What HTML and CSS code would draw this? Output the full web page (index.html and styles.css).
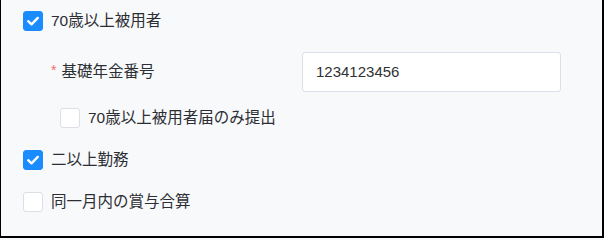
FILE: index.html
```html
<!DOCTYPE html>
<html lang="ja">
<head>
<meta charset="utf-8">
<link rel="stylesheet" href="styles.css">
</head>
<body>
<div class="frame">
  <div class="row r1">
    <span class="cb checked"><svg viewBox="0 0 20 20" width="20" height="20"><path d="M5.2 10.2 L8.5 13.3 L14.8 6.9" fill="none" stroke="#fff" stroke-width="2.4" stroke-linecap="round" stroke-linejoin="round"/></svg></span>
    <span class="lbl">70歳以上被用者</span>
  </div>
  <div class="row r2">
    <div class="field-label"><span class="req">*</span>基礎年金番号</div>
    <div class="input">1234123456</div>
  </div>
  <div class="row r3">
    <span class="cb"></span>
    <span class="lbl">70歳以上被用者届のみ提出</span>
  </div>
  <div class="row r4">
    <span class="cb checked"><svg viewBox="0 0 20 20" width="20" height="20"><path d="M5.2 10.2 L8.5 13.3 L14.8 6.9" fill="none" stroke="#fff" stroke-width="2.4" stroke-linecap="round" stroke-linejoin="round"/></svg></span>
    <span class="lbl">二以上勤務</span>
  </div>
  <div class="row r5">
    <span class="cb"></span>
    <span class="lbl">同一月内の賞与合算</span>
  </div>
</div>
</body>
</html>
```

FILE: styles.css
```css
html, body {
  margin: 0;
  padding: 0;
  background: #f8f9fb;
}
.frame {
  box-sizing: border-box;
  width: 604px;
  height: 238px;
  background: #f8f9fb;
  border-left: 1px solid #000;
  border-right: 2px solid #000;
  border-bottom: 2px solid #000;
  font-family: "Liberation Sans", "Noto Sans CJK JP", sans-serif;
  font-size: 15.5px;
  color: #2c2e33;
  display: flex;
  flex-direction: column;
}
.row {
  display: flex;
  align-items: center;
  padding-left: 22px;
}
.r1 { height: 42px; }
.r2 { height: 59px; padding-left: 49px; }
.r3 { height: 34px; padding-left: 59px; }
.r4 { height: 50px; }
.r5 { height: 34px; }
.cb {
  box-sizing: border-box;
  width: 20px;
  height: 20px;
  border: 1px solid #dcdfe6;
  border-radius: 3px;
  background: #fff;
  flex: none;
  display: flex;
}
.cb.checked {
  background: #1a8cff;
  border-color: #1a8cff;
}
.cb svg {
  margin: -1px;
}
.lbl {
  margin-left: 8px;
  line-height: 20px;
}
.field-label {
  width: 252px;
  display: flex;
  align-items: center;
  margin-top: -4px;
}
.req {
  color: #f56c6c;
  margin-right: 5px;
  margin-left: 1px;
  font-size: 14px;
}
.input {
  box-sizing: border-box;
  width: 259px;
  height: 40px;
  border: 1px solid #dcdfe6;
  border-radius: 3px;
  background: #fff;
  padding-left: 13px;
  display: flex;
  align-items: center;
  font-size: 15px;
  color: #303133;
}
```
